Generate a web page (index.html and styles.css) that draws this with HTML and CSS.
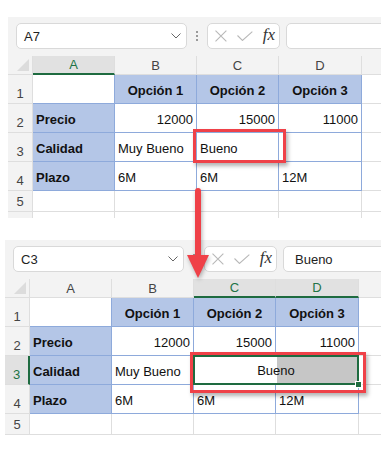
FILE: index.html
```html
<!DOCTYPE html>
<html lang="es">
<head>
    <meta charset="UTF-8">
    <title>Combinar celdas</title>
    <link rel="stylesheet" href="styles.css">
</head>
<body>
<div class="page">

    <!-- antes -->
    <div class="shot shot-top">
        <div class="toolbar">
            <div class="namebox">
                <span>A7</span>
                <svg width="10" height="6" viewBox="0 0 10 6"><path d="M0.5 0.5l4.5 4.5 4.5-4.5" fill="none" stroke="#666" stroke-width="1"/></svg>
            </div>
            <div class="grip">
                <svg width="2" height="10" viewBox="0 0 2 10"><rect y="0" width="2" height="2"/><rect y="4" width="2" height="2"/><rect y="8" width="2" height="2"/></svg>
            </div>
            <div class="fxbox">
                <svg width="12" height="12" viewBox="0 0 12 12"><path d="M0.5 0.5L11.5 11.5M11.5 0.5L0.5 11.5" fill="none" stroke="#b8b8b8" stroke-width="1.1"/></svg>
                <svg width="16" height="10" viewBox="0 0 16 10"><path d="M0.5 4.5L5.5 9.5L15.5 0.5" fill="none" stroke="#b8b8b8" stroke-width="1.1"/></svg>
                <span class="fx">fx</span>
            </div>
            <div class="formula"></div>
        </div>
        <div class="grid">
            <div class="corner"></div>
            <div class="col-head sel">A</div>
            <div class="col-head">B</div>
            <div class="col-head">C</div>
            <div class="col-head">D</div>
            <div class="col-head"></div>

            <div class="row-head">1</div>
            <div class="cell edge"></div>
            <div class="cell blue bold center">Opción 1</div>
            <div class="cell blue bold center">Opción 2</div>
            <div class="cell blue bold center">Opción 3</div>
            <div class="cell"></div>

            <div class="row-head">2</div>
            <div class="cell blue bold">Precio</div>
            <div class="cell edge num">12000</div>
            <div class="cell edge num">15000</div>
            <div class="cell edge num">11000</div>
            <div class="cell"></div>

            <div class="row-head">3</div>
            <div class="cell blue bold">Calidad</div>
            <div class="cell edge">Muy Bueno</div>
            <div class="cell edge">Bueno</div>
            <div class="cell edge"></div>
            <div class="cell"></div>

            <div class="row-head">4</div>
            <div class="cell blue bold">Plazo</div>
            <div class="cell edge">6M</div>
            <div class="cell edge">6M</div>
            <div class="cell edge">12M</div>
            <div class="cell"></div>

            <div class="row-head short">5</div>
            <div class="cell"></div>
            <div class="cell"></div>
            <div class="cell"></div>
            <div class="cell"></div>
            <div class="cell"></div>

            <div class="row-head"></div>
            <div class="cell"></div>
            <div class="cell"></div>
            <div class="cell"></div>
            <div class="cell"></div>
            <div class="cell"></div>
        </div>
    </div>

    <!-- despues -->
    <div class="shot shot-bottom">
        <div class="toolbar">
            <div class="namebox">
                <span>C3</span>
                <svg width="10" height="6" viewBox="0 0 10 6"><path d="M0.5 0.5l4.5 4.5 4.5-4.5" fill="none" stroke="#666" stroke-width="1"/></svg>
            </div>
            <div class="grip">
                <svg width="2" height="10" viewBox="0 0 2 10"><rect y="0" width="2" height="2"/><rect y="4" width="2" height="2"/><rect y="8" width="2" height="2"/></svg>
            </div>
            <div class="fxbox">
                <svg width="12" height="12" viewBox="0 0 12 12"><path d="M0.5 0.5L11.5 11.5M11.5 0.5L0.5 11.5" fill="none" stroke="#b8b8b8" stroke-width="1.1"/></svg>
                <svg width="16" height="10" viewBox="0 0 16 10"><path d="M0.5 4.5L5.5 9.5L15.5 0.5" fill="none" stroke="#b8b8b8" stroke-width="1.1"/></svg>
                <span class="fx">fx</span>
            </div>
            <div class="formula">Bueno</div>
        </div>
        <div class="grid">
            <div class="corner"></div>
            <div class="col-head">A</div>
            <div class="col-head">B</div>
            <div class="col-head sel">C</div>
            <div class="col-head sel">D</div>
            <div class="col-head"></div>

            <div class="row-head">1</div>
            <div class="cell edge"></div>
            <div class="cell blue bold center">Opción 1</div>
            <div class="cell blue bold center">Opción 2</div>
            <div class="cell blue bold center">Opción 3</div>
            <div class="cell"></div>

            <div class="row-head">2</div>
            <div class="cell blue bold">Precio</div>
            <div class="cell edge num">12000</div>
            <div class="cell edge num">15000</div>
            <div class="cell edge num">11000</div>
            <div class="cell"></div>

            <div class="row-head sel">3</div>
            <div class="cell blue bold">Calidad</div>
            <div class="cell edge">Muy Bueno</div>
            <div class="cell edge center merged">Bueno</div>
            <div class="cell"></div>

            <div class="row-head">4</div>
            <div class="cell blue bold">Plazo</div>
            <div class="cell edge">6M</div>
            <div class="cell edge">6M</div>
            <div class="cell edge">12M</div>
            <div class="cell"></div>

            <div class="row-head short">5</div>
            <div class="cell"></div>
            <div class="cell"></div>
            <div class="cell"></div>
            <div class="cell"></div>
            <div class="cell"></div>
        </div>
    </div>

    <!-- marcas -->
    <div class="mark mark-top"></div>
    <div class="mark mark-bottom"></div>
    <svg class="arrow" width="24" height="96" viewBox="0 0 24 96">
        <line x1="12" y1="6" x2="12" y2="72" stroke="#ef4148" stroke-width="6" stroke-linecap="round"/>
        <polygon points="1,70 23,70 12,93" fill="#ef4148"/>
    </svg>
</div>
</body>
</html>
```

FILE: styles.css
```css
body {
    margin: 0;
    font-family: "Liberation Sans", Arial, sans-serif;
    background: #fff;
    color: #111;
}
.page {
    position: relative;
    width: 381px;
    height: 455px;
    overflow: hidden;
}
.shot {
    width: 400px;
    background: #f3f3f3;
    overflow: hidden;
}
.shot-top {
    margin: 17px 0 0 8px;
    height: 201px;
}
.shot-bottom {
    margin: 22px 0 0 5px;
    height: 195px;
}

/* barra de formulas */
.toolbar {
    display: flex;
    align-items: center;
    height: 39px;
    box-sizing: border-box;
    padding: 6px 0 7px 8px;
}
.namebox, .fxbox, .formula {
    height: 26px;
    box-sizing: border-box;
    border: 1px solid #d9d9d9;
    border-radius: 5px;
    background: #fff;
    display: flex;
    align-items: center;
    font-size: 13px;
    color: #222;
}
.namebox {
    width: 171px;
    justify-content: space-between;
    padding: 0 5px 0 7px;
}
.grip {
    width: 20px;
    display: flex;
    justify-content: center;
}
.grip svg {
    fill: #9a9a9a;
}
.fxbox {
    width: 73px;
    padding: 0 4px 0 7px;
    gap: 10px;
}
.fx {
    font-family: "Liberation Serif", "Times New Roman", serif;
    font-style: italic;
    font-size: 17px;
    color: #333;
    margin-top: -2px;
}
.formula {
    flex: 1;
    margin-left: 6px;
    padding-left: 11px;
}

/* hoja */
.grid {
    display: grid;
    grid-template-columns: 25px 82px 82px 82px 83px 1fr;
    grid-template-rows: 19px 29px 29px 29px 29px 21px 29px;
    font-size: 13px;
}
.grid > div {
    box-sizing: border-box;
    border-right: 1px solid #dedede;
    border-bottom: 1px solid #dedede;
}
.corner {
    position: relative;
    background: #f3f3f3;
}
.corner::after {
    content: "";
    position: absolute;
    right: 3px;
    bottom: 3px;
    border-style: solid;
    border-width: 0 0 12px 12px;
    border-color: transparent transparent #dcdcdc transparent;
}
.col-head {
    background: #f3f3f3;
    color: #444;
    display: flex;
    align-items: center;
    justify-content: center;
}
.col-head.sel {
    background: #e1e1e1;
    color: #217346;
    border-bottom: 2px solid #1e6b40 !important;
}
.row-head {
    background: #f3f3f3;
    color: #444;
    display: flex;
    align-items: flex-end;
    justify-content: center;
    padding-bottom: 2px;
}
.row-head.short {
    align-items: center;
    padding-bottom: 0;
}
.row-head.sel {
    background: #e1e1e1;
    color: #217346;
    border-right: 2px solid #1e6b40 !important;
}
.cell {
    background: #fff;
    display: flex;
    align-items: flex-end;
    padding: 0 3px 5px;
    white-space: nowrap;
}
.grid > .edge, .grid > .blue {
    border-right-color: #8eaadb;
    border-bottom-color: #8eaadb;
}
.blue {
    background: #b4c6e7;
}
.bold {
    font-weight: bold;
}
.center {
    justify-content: center;
}
.num {
    justify-content: flex-end;
}
.merged {
    grid-column: span 2;
    position: relative;
    background: linear-gradient(to right, #fff 83px, #c6c6c6 83px);
    align-items: center;
    padding-bottom: 0;
}
.merged::before {
    content: "";
    position: absolute;
    left: -1px;
    top: -1px;
    right: -1px;
    bottom: -1px;
    border: 2px solid #1e6b40;
}
.merged::after {
    content: "";
    position: absolute;
    right: -4px;
    bottom: -4px;
    width: 5px;
    height: 5px;
    background: #1e6b40;
    border: 1px solid #fff;
}

/* marcas rojas */
.mark {
    position: absolute;
    box-sizing: border-box;
    border: 3px solid #ef4148;
    box-shadow: 2px 3px 4px rgba(0, 0, 0, 0.3);
}
.mark-top {
    left: 193px;
    top: 129px;
    width: 93px;
    height: 34px;
}
.mark-bottom {
    left: 190px;
    top: 352px;
    width: 176px;
    height: 41px;
}
.arrow {
    position: absolute;
    left: 186px;
    top: 185px;
    filter: drop-shadow(1px 2px 2px rgba(0, 0, 0, 0.3));
}
```
